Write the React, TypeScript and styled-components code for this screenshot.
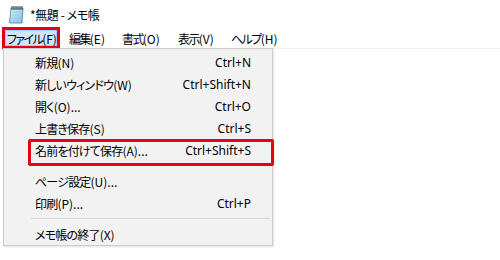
import React from "react";
import styled, { createGlobalStyle } from "styled-components";

const Global = createGlobalStyle`
  html, body { margin: 0; padding: 0; background: #fff; }
  body {
    font-family: "Noto Sans CJK JP", "Noto Sans", "Liberation Sans", sans-serif;
    font-feature-settings: "palt";
    color: #000;
  }
`;

const Window = styled.div`
  position: relative;
  width: 500px;
  height: 260px;
  background: #fff;
  overflow: hidden;
`;

const TitleBar = styled.div`
  display: flex;
  align-items: center;
  height: 28px;
  padding-left: 8px;
  gap: 5px;
  font-size: 12px;
  letter-spacing: -0.4px;
`;

const MenuBar = styled.div`
  display: flex;
  align-items: center;
  height: 20px;
  padding-left: 3px;
  border-bottom: 1px solid #f0f0f0;
  font-size: 12px;
`;

const MenuItem = styled.div<{ $active?: boolean; $w: number }>`
  position: relative;
  box-sizing: border-box;
  flex: none;
  width: ${(p) => p.$w}px;
  height: 20px;
  display: flex;
  align-items: center;
  white-space: nowrap;
  padding-left: ${(p) => (p.$active ? 4 : 10)}px;
  background: ${(p) => (p.$active ? "#cce8ff" : "transparent")};
  ${(p) =>
    p.$active &&
    `
    outline: 3px solid #e60012;
    outline-offset: -2px;
    box-shadow: inset 0 0 0 3px #99d1ff;
  `}
`;

const Dropdown = styled.div`
  position: absolute;
  left: 3px;
  top: 48px;
  width: 270px;
  box-sizing: border-box;
  background: #f2f2f2;
  border: 1px solid #cccccc;
  box-shadow: 1px 1px 2px rgba(0, 0, 0, 0.12);
  padding: 2px 0 0 0;
  font-size: 12px;
  height: 198px;
`;

const Row = styled.div<{ $marked?: boolean }>`
  position: relative;
  display: flex;
  align-items: center;
  justify-content: space-between;
  height: 22px;
  padding: 0 21px 0 31px;
  ${(p) =>
    p.$marked &&
    `
    &::after {
      content: "";
      position: absolute;
      left: 24px;
      right: -2px;
      top: 0px;
      bottom: -5px;
      border: 3px solid #e60012;
      border-radius: 2px;
    }
  `}
`;

const Label = styled.span`
  white-space: nowrap;
`;

const Kana = styled.span<{ $tight: number }>`
  letter-spacing: ${(p) => p.$tight}px;
`;

const Shortcut = styled.span`
  white-space: nowrap;
  font-family: "Noto Sans", "Liberation Sans", sans-serif;
  font-size: 12px;
`;

const Separator = styled.div`
  height: 1px;
  margin: 4px 2px 4px 27px;
  background: #d7d7d7;
`;

const NotepadIcon = () => (
  <svg width="17" height="19" viewBox="0 0 17 19">
    <defs>
      <linearGradient id="pg" x1="0" y1="0" x2="1" y2="1">
        <stop offset="0" stopColor="#d9f0fb" />
        <stop offset="1" stopColor="#7cc0e6" />
      </linearGradient>
    </defs>
    <path d="M3 3 L15 3 L14 18 L1.5 18 Z" fill="url(#pg)" stroke="#4a7fa8" strokeWidth="0.8" />
    <path d="M4 7 L13 7 M3.8 10 L12.8 10 M3.6 13 L12.6 13" stroke="#9fcbe6" strokeWidth="0.8" />
    {[4, 6, 8, 10, 12, 14].map((x) => (
      <rect key={x} x={x - 0.5} y={1} width={1} height={4} fill="#3a3a3a" />
    ))}
  </svg>
);

const Text = ({ text, tight }: { text: string; tight: number }) => {
  const i = text.indexOf("(");
  const head = i >= 0 ? text.slice(0, i) : text;
  const tail = i >= 0 ? text.slice(i) : "";
  return (
    <Label>
      <Kana $tight={tight}>{head}</Kana>
      {tail}
    </Label>
  );
};

const menus = [
  { label: "ファイル(F)", w: 56, active: true },
  { label: "編集(E)", w: 53 },
  { label: "書式(O)", w: 56 },
  { label: "表示(V)", w: 53 },
  { label: "ヘルプ(H)", w: 60 },
];

type Item = { label: string; key?: string; marked?: boolean } | "sep";

const items: Item[] = [
  { label: "新規(N)", key: "Ctrl+N" },
  { label: "新しいウィンドウ(W)", key: "Ctrl+Shift+N" },
  { label: "開く(O)...", key: "Ctrl+O" },
  { label: "上書き保存(S)", key: "Ctrl+S" },
  { label: "名前を付けて保存(A)...", key: "Ctrl+Shift+S", marked: true },
  "sep",
  { label: "ページ設定(U)..." },
  { label: "印刷(P)...", key: "Ctrl+P" },
  "sep",
  { label: "メモ帳の終了(X)" },
];

export default function App() {
  return (
    <Window>
      <Global />
      <TitleBar>
        <NotepadIcon />
        <span>*無題 - メモ帳</span>
      </TitleBar>
      <MenuBar>
        {menus.map((m) => (
          <MenuItem key={m.label} $active={m.active} $w={m.w}>
            <Text text={m.label} tight={-1.6} />
          </MenuItem>
        ))}
      </MenuBar>
      <Dropdown>
        {items.map((it, i) =>
          it === "sep" ? (
            <Separator key={i} />
          ) : (
            <Row key={i} $marked={it.marked}>
              <Text text={it.label} tight={-0.8} />
              {it.key && <Shortcut>{it.key}</Shortcut>}
            </Row>
          )
        )}
      </Dropdown>
    </Window>
  );
}
